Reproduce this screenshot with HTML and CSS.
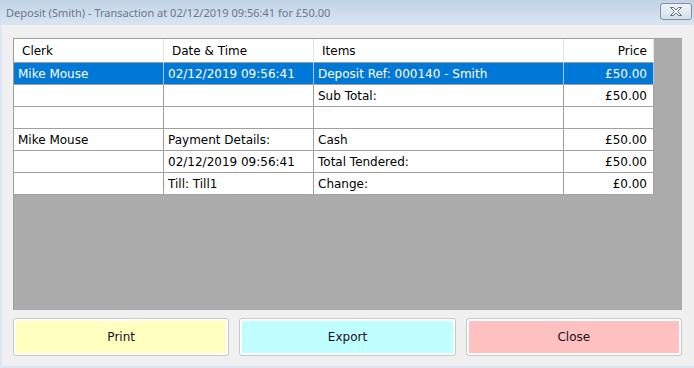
FILE: index.html
```html
<!DOCTYPE html>
<html lang="en">
<head>
  <meta charset="UTF-8" />
  <title>Deposit (Smith) - Transaction</title>
  <link rel="stylesheet" href="styles.css">
</head>
<body>
  <div class="window">
    <!-- Title bar -->
    <div class="titlebar">
      <span class="title">Deposit (Smith) - Transaction at 02/12/2019 09:56:41 for £50.00</span>
      <button class="close-x" title="Close">
        <svg width="16" height="11" viewBox="0 0 16 11">
          <path d="M2.5 1.5 H5.5 L8 4 L10.5 1.5 H13.5 L9.5 5.5 L13.5 9.5 H10.5 L8 7 L5.5 9.5 H2.5 L6.5 5.5 Z" fill="#fff" stroke="#5f6b7a" stroke-width="1" stroke-linejoin="round"/>
        </svg>
      </button>
    </div>

    <div class="content">
      <!-- Transaction grid -->
      <div class="grid">
        <table class="trans">
          <colgroup>
            <col class="c-clerk"><col class="c-date"><col class="c-items"><col class="c-price">
          </colgroup>
          <tr class="head">
            <th>Clerk</th><th>Date &amp; Time</th><th>Items</th><th class="num">Price</th>
          </tr>
          <tr class="selected">
            <td>Mike Mouse</td><td>02/12/2019 09:56:41</td><td>Deposit Ref: 000140 - Smith</td><td class="num">£50.00</td>
          </tr>
          <tr>
            <td></td><td></td><td>Sub Total:</td><td class="num">£50.00</td>
          </tr>
          <tr>
            <td></td><td></td><td></td><td class="num"></td>
          </tr>
          <tr>
            <td>Mike Mouse</td><td>Payment Details:</td><td>Cash</td><td class="num">£50.00</td>
          </tr>
          <tr>
            <td></td><td>02/12/2019 09:56:41</td><td>Total Tendered:</td><td class="num">£50.00</td>
          </tr>
          <tr>
            <td></td><td>Till: Till1</td><td>Change:</td><td class="num">£0.00</td>
          </tr>
        </table>
      </div>

      <!-- Buttons -->
      <div class="actions">
        <button class="btn print">Print</button>
        <button class="btn export">Export</button>
        <button class="btn close">Close</button>
      </div>
    </div>
  </div>
</body>
</html>
```

FILE: styles.css
```css
html, body {
  margin: 0;
  padding: 0;
}

body {
  width: 694px;
  height: 368px;
  overflow: hidden;
  font-family: "DejaVu Sans", Verdana, sans-serif;
  font-size: 12px;
  color: #000;
}

.window {
  width: 694px;
  height: 368px;
  box-sizing: border-box;
  border-left: 2px solid #dbe6f2;
  border-bottom: 2px solid #dbe6f2;
  background: #f0f0f0;
  display: flex;
  flex-direction: column;
}

/* Title bar */
.titlebar {
  height: 25px;
  margin-left: -2px;
  background: linear-gradient(to bottom, #c2d3e6, #d9e5f2);
  display: flex;
  align-items: center;
  justify-content: space-between;
  padding: 0 2px 0 6px;
}

.title {
  font-family: "Noto Sans", "Open Sans", sans-serif;
  font-size: 11px;
  color: #6b7786;
}

.close-x {
  width: 32px;
  height: 17px;
  margin-top: -3px;
  padding: 0;
  border: 1px solid #8391a2;
  border-radius: 3px;
  background: linear-gradient(to bottom, #eef3f8, #d6e0eb);
  display: flex;
  align-items: center;
  justify-content: center;
}

/* Body */
.content {
  flex: 1;
  display: flex;
  flex-direction: column;
  padding: 13px 12px 10px 11px;
  gap: 8px;
}

.grid {
  height: 272px;
  box-sizing: border-box;
  background: #ababab;
  border-top: 1px solid #a0a0a0;
  border-left: 1px solid #a0a0a0;
}

.trans {
  table-layout: fixed;
  width: 640px;
  border-collapse: separate;
  border-spacing: 0;
  background: #fff;
}

.c-clerk { width: 150px; }
.c-date { width: 150px; }
.c-items { width: 250px; }
.c-price { width: 90px; }

.trans th, .trans td {
  box-sizing: border-box;
  height: 22px;
  padding: 0 4px;
  border-right: 1px solid #a0a0a0;
  border-bottom: 1px solid #a0a0a0;
  font-weight: normal;
  text-align: left;
  white-space: nowrap;
  overflow: hidden;
}

.trans .head th {
  height: 24px;
  padding: 0 8px;
  border-right-color: #e6e6e6;
}

.trans .num {
  text-align: right;
  padding-right: 6px;
}

.trans .head th.num {
  padding-right: 6px;
}

.trans .selected td {
  background: #0078d7;
  color: #fff;
  border-right-color: #a9c8e6;
}

/* Buttons */
.actions {
  display: flex;
  gap: 10px;
}

.btn {
  flex: 1;
  height: 38px;
  font-family: "DejaVu Sans", Verdana, sans-serif;
  font-size: 12px;
  color: #1a0f1f;
  border: 1px solid #c9c9c9;
  border-radius: 3px;
  box-shadow: inset 0 0 0 2px #fff;
  cursor: pointer;
}

.btn.print { background: #ffffc0; }
.btn.export { background: #c0ffff; }
.btn.close { background: #ffc0c0; }
```
